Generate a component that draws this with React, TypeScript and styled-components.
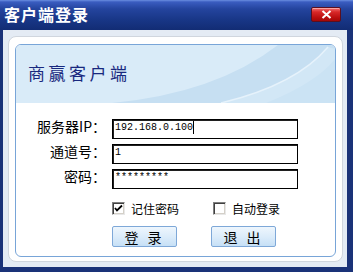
import styled, { createGlobalStyle } from "styled-components";

const GlobalStyle = createGlobalStyle`
  html, body { margin: 0; padding: 0; background: #ffffff; }
  body { font-family: "Noto Sans CJK SC", "Liberation Sans", sans-serif; }
`;

const CJK = `"Noto Sans CJK SC", "Liberation Sans", sans-serif`;

const Window = styled.div`
  width: 353px;
  height: 272px;
  display: flex;
  flex-direction: column;
  background: #1a3278;
  overflow: hidden;
`;

const TitleBar = styled.div`
  height: 30px;
  flex: none;
  display: flex;
  align-items: center;
  justify-content: space-between;
  padding: 0 12px 0 4px;
  background: linear-gradient(#6a8ee0 0px, #3a5cc0 2px, #24449e 9px, #183686 20px, #122c74 30px);
`;

const Title = styled.span`
  color: #ffffff;
  font-family: ${CJK};
  font-weight: 700;
  font-size: 16px;
  letter-spacing: 1px;
  line-height: 30px;
  margin-top: -2px;
`;

const CloseButton = styled.div`
  width: 28px;
  height: 13px;
  margin-top: -2px;
  display: flex;
  align-items: center;
  justify-content: center;
  border: 1px solid #5a1020;
  border-radius: 2px;
  background: linear-gradient(#f07070 0px, #d82828 4px, #b80c0c 10px, #9a0606 14px);
  box-shadow: inset 0 1px 0 rgba(255, 200, 200, 0.6);
`;

const Body = styled.div`
  flex: 1;
  display: flex;
  flex-direction: column;
  background: #e4ebf4;
  margin: 0 6px 5px 3px;
  padding: 6px 4px 5px 5px;
`;

const OuterPanel = styled.div`
  flex: 1;
  display: flex;
  flex-direction: column;
  background: #ffffff;
  border: 1px solid #d0d6de;
  border-radius: 8px;
  padding: 7px 6px 4px 6px;
`;

const InnerPanel = styled.div`
  flex: 1;
  display: flex;
  flex-direction: column;
  border: 1px solid #78a5d8;
  border-radius: 6px;
  overflow: hidden;
`;

const Banner = styled.div`
  position: relative;
  height: 58px;
  flex: none;
  display: flex;
  align-items: center;
  padding-left: 12px;
  background: #d9ebf8;
`;

const BannerArt = styled.svg`
  position: absolute;
  inset: 0;
`;

const BannerTitle = styled.span`
  position: relative;
  color: #18287e;
  font-family: ${CJK};
  font-size: 17px;
  letter-spacing: 3.5px;
  line-height: 20px;
  margin-top: -2px;
`;

const Form = styled.div`
  display: grid;
  grid-template-columns: 92px 186px;
  column-gap: 4px;
  row-gap: 5px;
  padding-top: 16px;
`;

const Label = styled.span`
  text-align: right;
  padding-right: 2px;
  font-family: ${CJK};
  font-size: 14px;
  line-height: 20px;
  color: #000000;
  align-self: start;
  margin-top: -3px;
  white-space: nowrap;
`;

const Field = styled.div`
  height: 20px;
  box-sizing: border-box;
  border: 1px solid #000000;
  box-shadow: inset 1px 1px 0 #202020;
  display: flex;
  align-items: flex-start;
  padding: 2px 0 0 2px;
  font-family: "Liberation Mono", monospace;
  font-size: 10px;
  line-height: 12px;
  color: #000000;
`;

const Caret = styled.span`
  width: 1px;
  height: 13px;
  margin-top: -1px;
  background: #000000;
`;

const OptionRow = styled.div`
  display: flex;
  margin: 13px 0 0 96px;
`;

const Option = styled.label<{ $width: number }>`
  width: ${(p) => p.$width}px;
  display: flex;
  align-items: center;
  gap: 6px;
  font-family: ${CJK};
  font-size: 12px;
  line-height: 13px;
  color: #000000;
`;

const Box = styled.span`
  width: 13px;
  height: 13px;
  box-sizing: border-box;
  flex: none;
  display: flex;
  align-items: center;
  justify-content: center;
  background: #ffffff;
  border-top: 1px solid #808080;
  border-left: 1px solid #808080;
  border-right: 1px solid #e8e8e8;
  border-bottom: 1px solid #e8e8e8;
  box-shadow: inset 1px 1px 0 #404040, inset -1px -1px 0 #d4d0c8;
`;

const ButtonRow = styled.div`
  display: flex;
  gap: 34px;
  margin: 11px 0 0 96px;
`;

const Button = styled.div`
  width: 65px;
  height: 21px;
  box-sizing: border-box;
  display: flex;
  align-items: center;
  justify-content: center;
  border: 1px solid #7ea8d8;
  border-radius: 2px;
  background: linear-gradient(#eef6fd 0%, #dcecfa 50%, #c6e0f6 100%);
  font-family: ${CJK};
  font-size: 14px;
  letter-spacing: 3px;
  white-space: pre;
  color: #000000;
`;

function Check({ on }: { on: boolean }) {
  return (
    <Box>
      {on && (
        <svg width="9" height="9" viewBox="0 0 9 9">
          <path d="M1 4 L3 6.5 L8 1.5" stroke="#000" strokeWidth="1.8" fill="none" />
        </svg>
      )}
    </Box>
  );
}

export default function App() {
  return (
    <>
      <GlobalStyle />
      <Window>
        <TitleBar>
          <Title>客户端登录</Title>
          <CloseButton>
            <svg width="11" height="9" viewBox="0 0 11 9">
              <path d="M1.5 1 L9.5 8 M9.5 1 L1.5 8" stroke="#fff" strokeWidth="2" />
            </svg>
          </CloseButton>
        </TitleBar>
        <Body>
          <OuterPanel>
            <InnerPanel>
              <Banner>
                <BannerArt width="319" height="58" viewBox="0 0 319 58">
                  <path d="M96 58 Q 200 48 262 0 L319 0 L319 58 Z" fill="#c6dff2" />
                  <path d="M205 58 Q 280 40 312 2 L319 4 L319 58 Z" fill="#d2e7f6" />
                  <path d="M205 58 Q 280 40 312 2" stroke="#e6f2fb" strokeWidth="1.5" fill="none" />
                  <path d="M250 58 Q 300 38 319 14 L319 58 Z" fill="#cbe3f4" />
                </BannerArt>
                <BannerTitle>商赢客户端</BannerTitle>
              </Banner>
              <Form>
                <Label>服务器IP：</Label>
                <Field>
                  192.168.0.100
                  <Caret />
                </Field>
                <Label>通道号：</Label>
                <Field>1</Field>
                <Label>密码：</Label>
                <Field>*********</Field>
              </Form>
              <OptionRow>
                <Option $width={101}>
                  <Check on={true} />
                  记住密码
                </Option>
                <Option $width={80}>
                  <Check on={false} />
                  自动登录
                </Option>
              </OptionRow>
              <ButtonRow>
                <Button>登 录</Button>
                <Button>退 出</Button>
              </ButtonRow>
            </InnerPanel>
          </OuterPanel>
        </Body>
      </Window>
    </>
  );
}
